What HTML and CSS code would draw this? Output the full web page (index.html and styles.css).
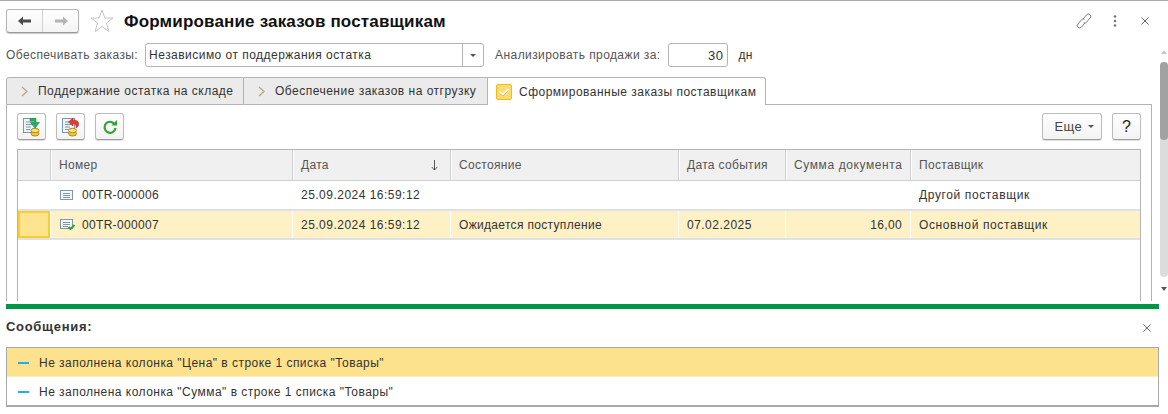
FILE: index.html
```html
<!DOCTYPE html>
<html lang="ru">
<head>
<meta charset="utf-8">
<title>Формирование заказов поставщикам</title>
<link rel="stylesheet" href="styles.css">
</head>
<body>
<div class="top">
  <main class="form">
    <header class="head">
      <div class="nav">
        <button class="nav-btn"><svg width="14" height="10" viewBox="0 0 14 10"><path d="M0 5 5 0.5V3.5H13V6.5H5V9.500Z" fill="#4a4a4a"/></svg></button>
        <button class="nav-btn nav-next"><svg width="14" height="10" viewBox="0 0 14 10"><path d="M14 5 9 0.5V3.500H1V6.500H9V9.500Z" fill="#b4b4b4"/></svg></button>
      </div>
      <svg class="star" width="24" height="24" viewBox="0 0 24 24"><path d="M12 1 14.900 9H23L16.500 14 18.900 22.500 12 17.500 5.100 22.500 7.500 14 1 9H9.100Z" fill="#fff" stroke="#c4c4c4"/></svg>
      <h1 class="title">Формирование заказов поставщикам</h1>
      <div class="head-tools">
        <svg width="16" height="16" viewBox="0 0 16 16" fill="none" stroke="#7c7c7c" stroke-width="1"><path d="M7 6 10.500 1.800a2.400 2.400 0 0 1 3.600 3.200L10.500 9.200a2.400 2.400 0 0 1-3 .6"/><path d="M9 10 5.500 14.200a2.400 2.400 0 0 1-3.600-3.200L5.500 6.800a2.400 2.400 0 0 1 3-.6"/></svg>
        <svg class="kebab" width="4" height="12" viewBox="0 0 4 12" fill="#777"><circle cx="2" cy="1.500" r="1.300"/><circle cx="2" cy="6" r="1.300"/><circle cx="2" cy="10.500" r="1.300"/></svg>
        <svg class="close" width="8" height="8" viewBox="0 0 8 8" stroke="#666" stroke-width="1"><path d="M.5.5 7.500 7.500M7.500.5.5 7.500"/></svg>
      </div>
    </header>

    <div class="fields">
      <label class="lbl">Обеспечивать заказы:</label>
      <div class="input select"><span class="input-text">Независимо от поддержания остатка</span><span class="select-btn"><i class="tri"></i></span></div>
      <label class="lbl lbl-days">Анализировать продажи за:</label>
      <div class="input num">30</div>
      <span class="unit">дн</span>
    </div>

    <nav class="tabs">
      <div class="tab tab-1"><svg class="chev" width="7" height="11" viewBox="0 0 7 11" fill="none" stroke="#b5aa90" stroke-width="1.400"><path d="M1 1 6 5.500 1 10"/></svg>Поддержание остатка на складе</div>
      <div class="tab tab-2"><svg class="chev" width="7" height="11" viewBox="0 0 7 11" fill="none" stroke="#b5aa90" stroke-width="1.400"><path d="M1 1 6 5.500 1 10"/></svg>Обеспечение заказов на отгрузку</div>
      <div class="tab tab-active"><svg class="check" width="16" height="16" viewBox="0 0 16 16"><rect x=".5" y=".5" width="15" height="15" rx="1.500" fill="#fddc6e" stroke="#f5b81f"/><path d="M3.500 8 7 10.500 12.500 5" fill="none" stroke="#fff" stroke-width="2"/><path d="M3.500 9.500 7 12 12.500 6.500" fill="none" stroke="#e7b96a" stroke-width="1"/></svg>Сформированные заказы поставщикам</div>
      <div class="tab-rest"></div>
    </nav>

    <section class="panel">
      <div class="toolbar">
        <button class="btn icon-btn"><svg width="20" height="20" viewBox="0 0 20 20"><rect x="1.500" y="1.500" width="12" height="14" fill="#eef3f7" stroke="#7d97ab"/><path d="M4 5h7M4 7.500h7M4 10h5M4 12.500h4" stroke="#7d97ab"/><ellipse cx="13" cy="16.500" rx="4" ry="2.500" fill="#f2c63c" stroke="#b58a1a"/><ellipse cx="13" cy="13.500" rx="4" ry="2.200" fill="#fbe27a" stroke="#b58a1a"/><path d="M8 1.500h6l0 4h3.500l-4.500 5.500-4.500-5.500h3.500V4H8Z" fill="#27b05a" stroke="#1a8a43" stroke-width=".6"/></svg></button>
        <button class="btn icon-btn"><svg width="20" height="20" viewBox="0 0 20 20"><rect x="1.500" y="1.500" width="12" height="14" fill="#eef3f7" stroke="#7d97ab"/><path d="M4 5h7M4 7.500h7M4 10h5M4 12.500h4" stroke="#7d97ab"/><ellipse cx="11.500" cy="16.500" rx="4" ry="2.500" fill="#f2c63c" stroke="#b58a1a"/><ellipse cx="11.500" cy="13.500" rx="4" ry="2.200" fill="#fbe27a" stroke="#b58a1a"/><path d="M12 1 7.500 5l4.500 4V6.500c2.500 0 3.500 1.500 3 4.500 2-1 3-3 2.500-5C17 3.500 14.500 3 12 3.200Z" fill="#e23b30" stroke="#b82820" stroke-width=".6"/></svg></button>
        <button class="btn icon-btn"><svg width="16" height="16" viewBox="0 0 16 16" fill="none"><path d="M12.800 5.500A5.500 5.500 0 1 0 13.500 9" stroke="#2fa52f" stroke-width="2.200"/><path d="M9.500 6.500H15V1Z" fill="#2fa52f"/></svg></button>
        <div class="toolbar-right">
          <button class="btn more">Еще<i class="tri"></i></button>
          <button class="btn help">?</button>
        </div>
      </div>

      <div class="table">
        <div class="row thead">
          <div class="cell"></div>
          <div class="cell">Номер</div>
          <div class="cell cell-sort">Дата<svg width="7" height="11" viewBox="0 0 7 11" fill="none" stroke="#555"><path d="M3.500 0V10M.8 7 3.500 10 6.200 7"/></svg></div>
          <div class="cell">Состояние</div>
          <div class="cell">Дата события</div>
          <div class="cell cell-wide">Сумма документа</div>
          <div class="cell">Поставщик</div>
        </div>
        <div class="row tr">
          <div class="cell"></div>
          <div class="cell cell-doc"><svg width="15" height="11" viewBox="0 0 15 11"><rect x=".5" y=".5" width="12" height="9" fill="#f4f6f8" stroke="#8198ab"/><path d="M3 3.500h7M3 5.500h7M3 7.500h7" stroke="#8198ab"/></svg>00TR-000006</div>
          <div class="cell cell-date">25.09.2024 16:59:12</div>
          <div class="cell"></div>
          <div class="cell"></div>
          <div class="cell"></div>
          <div class="cell cell-supplier">Другой поставщик</div>
        </div>
        <div class="row tr tr-selected">
          <div class="cell cell-marker"></div>
          <div class="cell cell-doc"><svg width="15" height="11" viewBox="0 0 15 11"><rect x=".5" y=".5" width="12" height="9" fill="#f4f6f8" stroke="#8198ab"/><path d="M3 3.500h7M3 5.500h7M3 7.500h5" stroke="#8198ab"/><path d="M8.500 8 10.500 10 14.500 6" fill="none" stroke="#2fa52f" stroke-width="2"/></svg>00TR-000007</div>
          <div class="cell cell-date">25.09.2024 16:59:12</div>
          <div class="cell">Ожидается поступление</div>
          <div class="cell cell-date">07.02.2025</div>
          <div class="cell cell-num">16,00</div>
          <div class="cell cell-supplier">Основной поставщик</div>
        </div>
      </div>
    </section>
  </main>

  <aside class="scrollbar">
    <i class="sb-up"></i>
    <div class="sb-track"><div class="sb-thumb"></div></div>
    <i class="sb-down"></i>
  </aside>
</div>

<div class="green-bar"></div>

<section class="messages">
  <div class="msg-head">
    <span class="msg-title">Сообщения:</span>
    <svg class="msg-close" width="8" height="8" viewBox="0 0 8 8" stroke="#666" stroke-width="1"><path d="M.5.5 7.500 7.500M7.500.5.5 7.500"/></svg>
  </div>
  <div class="msg-list">
    <div class="msg msg-active"><i class="dash"></i>Не заполнена колонка "Цена" в строке 1 списка "Товары"</div>
    <div class="msg"><i class="dash"></i>Не заполнена колонка "Сумма" в строке 1 списка "Товары"</div>
  </div>
</section>
</body>
</html>
```
FILE: styles.css
```css
* { box-sizing: border-box; }
html, body { margin: 0; height: 414px; overflow: hidden; background: #fff; }
body { font: 12px "Liberation Sans", Arial, sans-serif; letter-spacing: .32px; color: #333; border-top: 1px solid #a8a8a8; }
button { font: inherit; color: inherit; padding: 0; letter-spacing: inherit; }

.top { display: flex; height: 303px; }
.form { width: 1160px; padding-left: 6px; display: flex; flex-direction: column; }

.head { display: flex; align-items: center; height: 24px; margin-top: 8px; }
.nav { display: flex; width: 73px; height: 24px; border: 1px solid #b4b4b4; border-bottom-color: #999; border-radius: 3px; background: linear-gradient(#fff, #f4f4f4); box-shadow: 0 1px 1px #ccc; }
.nav-btn { flex: 1; display: flex; align-items: center; justify-content: center; border: 0; background: none; }
.nav-next { border-left: 1px solid #d0d0d0; }
.star { margin-left: 11px; }
.title { margin: 2px 0 0 10px; font-size: 17px; letter-spacing: .17px; font-weight: bold; color: #111; }
.head-tools { margin-left: auto; margin-right: 11px; display: flex; align-items: center; }
.kebab { margin-left: 21px; }
.close { margin-left: 24px; }

.fields { display: flex; align-items: center; height: 24px; margin-top: 10px; }
.lbl { color: #555; white-space: nowrap; letter-spacing: .41px; }
.input { height: 24px; border: 1px solid #b4b4b4; border-radius: 3px; background: #fff; color: #333; display: flex; align-items: center; letter-spacing: .47px; }
.select { width: 339px; margin-left: 7px; padding-left: 3px; }
.input-text { flex: 1; }
.select-btn { width: 21px; height: 22px; border-left: 1px solid #b4b4b4; display: flex; align-items: center; justify-content: center; }
.tri { display: inline-block; border: 3px solid transparent; border-top: 3px solid #555; border-bottom: 0; }
.lbl-days { margin-left: 11px; }
.num { width: 60px; margin-left: 7px; padding-right: 3px; justify-content: flex-end; font-size: 13px; }
.unit { margin-left: 11px; }

.tabs { display: flex; height: 28px; margin-top: 10px; padding-right: 8px; }
.tab { display: flex; align-items: center; height: 28px; background: #ebebeb; border: 1px solid #b4b4b4; border-left: 0; white-space: nowrap; letter-spacing: .49px; }
.tab-1 { width: 238px; border-left: 1px solid #b4b4b4; border-top-left-radius: 3px; padding-left: 14px; }
.tab-2 { width: 244px; padding-left: 14px; }
.tab-active { width: 278px; background: #fff; border-bottom: 0; border-radius: 0 3px 0 0; padding-left: 8px; }
.chev { margin-right: 10px; }
.check { margin-right: 7px; }
.tab-rest { flex: 1; border-bottom: 1px solid #b4b4b4; }

.panel { flex: 1; min-height: 0; width: 1146px; border: 1px solid #b4b4b4; border-width: 0 1px; padding: 8px 10px 0; display: flex; flex-direction: column; margin-bottom: 3px; overflow: hidden; }
.toolbar { display: flex; gap: 10px; height: 27px; flex: none; }
.btn { height: 27px; border: 1px solid #bcbcbc; border-bottom-color: #9c9c9c; border-radius: 3px; background: linear-gradient(#fff, #f3f3f3); box-shadow: 0 1px 1px #ddd; }
.icon-btn { width: 29px; display: flex; align-items: center; justify-content: center; }
.toolbar-right { margin-left: auto; display: flex; gap: 10px; }
.more { width: 60px; display: flex; align-items: center; justify-content: flex-end; gap: 6px; padding-right: 7px; font-size: 13px; color: #444; }
.help { width: 29px; font-size: 16px; color: #222; }

.table { margin-top: 9px; flex: 1; border: 1px solid #b4b4b4; border-bottom: 0; width: 1124px; }
.row { display: grid; grid-template-columns: 32px 242px 158px 228px 107px 125px 1fr; }
.cell { display: flex; align-items: center; padding-left: 9px; white-space: nowrap; }
.thead { height: 31px; background: #f0f0f0; border-bottom: 1px solid #cfcfcf; color: #555; }
.thead .cell + .cell { box-shadow: inset 1px 0 0 #cfcfcf, inset 2px 0 0 #fff; }
.cell-sort { justify-content: space-between; padding-right: 12px; }
.cell-wide { letter-spacing: .6px; }
.tr { height: 30px; border-bottom: 2px solid #dfe1e8; }
.tr-selected { height: 29px; background: #fdf1c5; }
.tr-selected .cell + .cell { box-shadow: inset 1px 0 0 #fff; }
.tr-selected .cell-marker { background: #ffe48f; border: 2px solid #fdcb2c; }
.cell-doc svg { margin-right: 7px; margin-left: 1px; }
.cell-date { letter-spacing: .48px; }
.cell-supplier { letter-spacing: .62px; }
.cell-num { justify-content: flex-end; padding-right: 8px; }

.scrollbar { flex: 1; display: flex; flex-direction: column; align-items: center; padding-top: 49px; padding-bottom: 13px; }
.sb-up, .sb-down { display: block; border: 3px solid transparent; }
.sb-up { border-bottom: 4px solid #ccc; border-top: 0; }
.sb-down { border-top: 4px solid #555; border-bottom: 0; margin-top: 10px; }
.sb-track { flex: 1; width: 8px; margin-top: 8px; background: #dcdcdc; border-radius: 4px; }
.sb-thumb { height: 78px; background: #a2a2a2; border-radius: 4px; }

.green-bar { height: 5px; width: 1153px; margin-left: 6px; background: #009646; }

.messages { padding: 0 9px 0 6px; }
.msg-head { display: flex; justify-content: space-between; align-items: center; height: 38px; padding: 0 8px 4px 0; font-weight: bold; font-size: 13px; color: #333; }
.msg-title { letter-spacing: .7px; }
.msg-close { margin-top: 4px; }
.msg-list { border: 1px solid #a8a8a8; border-bottom-width: 2px; height: 60px; }
.msg { height: 29px; display: flex; align-items: center; padding: 1px 0 0 11px; letter-spacing: .47px; }
.msg-active { background: #fde28d; border-bottom: 1px solid #fdeeb8; }
.dash { width: 11px; height: 2px; background: #25aee6; margin-right: 10px; }
```
